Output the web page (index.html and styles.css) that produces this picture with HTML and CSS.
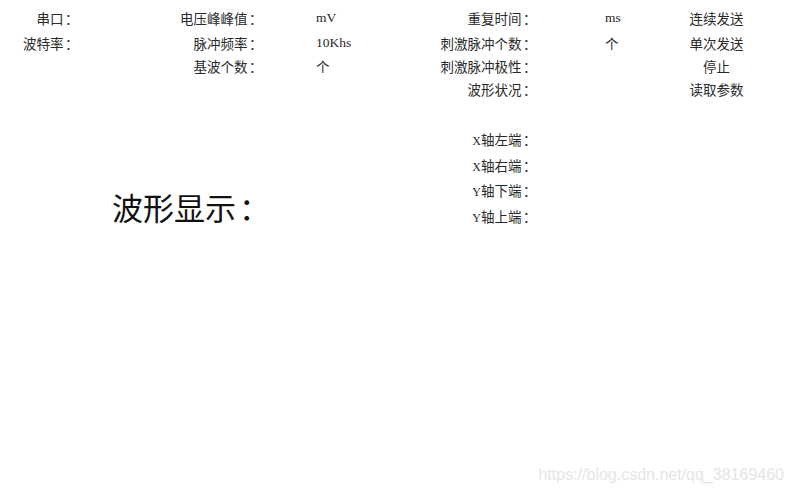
FILE: index.html
```html
<!DOCTYPE html>
<html lang="zh-CN">
<head>
<meta charset="utf-8">
<title>波形显示</title>
<link rel="stylesheet" href="styles.css">
</head>
<body>
<div class="page">
  <div class="params">
    <div class="c1">串口<span class="colon">：</span></div>
    <div class="c2">电压峰峰值<span class="colon">：</span></div>
    <div class="c3 latin">mV</div>
    <div class="c4">重复时间<span class="colon">：</span></div>
    <div class="c5 latin">ms</div>
    <div class="c6">连续发送</div>

    <div class="c1">波特率<span class="colon">：</span></div>
    <div class="c2">脉冲频率<span class="colon">：</span></div>
    <div class="c3 latin">10Khs</div>
    <div class="c4">刺激脉冲个数<span class="colon">：</span></div>
    <div class="c5">个</div>
    <div class="c6">单次发送</div>

    <div class="c1"></div>
    <div class="c2">基波个数<span class="colon">：</span></div>
    <div class="c3">个</div>
    <div class="c4">刺激脉冲极性<span class="colon">：</span></div>
    <div class="c5"></div>
    <div class="c6">停止</div>

    <div class="c1"></div>
    <div class="c2"></div>
    <div class="c3"></div>
    <div class="c4">波形状况<span class="colon">：</span></div>
    <div class="c5"></div>
    <div class="c6">读取参数</div>
  </div>

  <div class="wave">
    <div class="wave-title">波形显示<span class="colon title-colon">：</span></div>
    <div class="axis">
      <div class="axis-row"><span class="latin axis-letter">X</span>轴左端<span class="colon">：</span></div>
      <div class="axis-row"><span class="latin axis-letter">X</span>轴右端<span class="colon">：</span></div>
      <div class="axis-row"><span class="latin axis-letter">Y</span>轴下端<span class="colon">：</span></div>
      <div class="axis-row"><span class="latin axis-letter">Y</span>轴上端<span class="colon">：</span></div>
    </div>
  </div>

  <div class="watermark">https://blog.csdn.net/qq_38169460</div>
</div>
</body>
</html>
```
FILE: styles.css
```css
html, body {
  margin: 0;
  padding: 0;
  background: #ffffff;
}

.page {
  position: relative;
  width: 794px;
  height: 494px;
  overflow: hidden;
  font-family: "Noto Sans CJK SC", sans-serif;
  color: #2a2a2a;
  font-size: 13.5px;
}

.latin {
  font-family: "Liberation Serif", serif;
}

.axis-letter {
  font-size: 12px;
}

.colon {
  display: inline-block;
  width: 1em;
  text-align: left;
  padding-left: 0.12em;
  box-sizing: border-box;
}

.title-colon {
  padding-left: 0;
  text-indent: 0.1em;
}

.params {
  display: grid;
  grid-template-columns: 77px 184px 139px 135px 153px 57px;
  grid-template-rows: 25px 25px 21px 25px;
  padding-top: 5px;
  align-items: center;
  line-height: 16px;
  white-space: nowrap;
}

.c1, .c2, .c4 {
  text-align: right;
}

.c3 {
  padding-left: 55px;
}

.c5 {
  padding-left: 70px;
}

.c6 {
  text-align: center;
}

.wave {
  display: flex;
  padding-top: 26.5px;
}

.wave-title {
  box-sizing: border-box;
  width: 400px;
  padding-left: 112px;
  padding-top: 63px;
  font-size: 31px;
  line-height: 31px;
  color: #111111;
  white-space: nowrap;
}

.axis {
  width: 135px;
  display: grid;
  grid-auto-rows: 25.5px;
  align-items: center;
  text-align: right;
  line-height: 16px;
  white-space: nowrap;
}

.watermark {
  position: absolute;
  right: 10px;
  bottom: 10px;
  font-family: "Liberation Sans", Arial, sans-serif;
  font-size: 16px;
  color: #e6e6e6;
  white-space: nowrap;
}
```
